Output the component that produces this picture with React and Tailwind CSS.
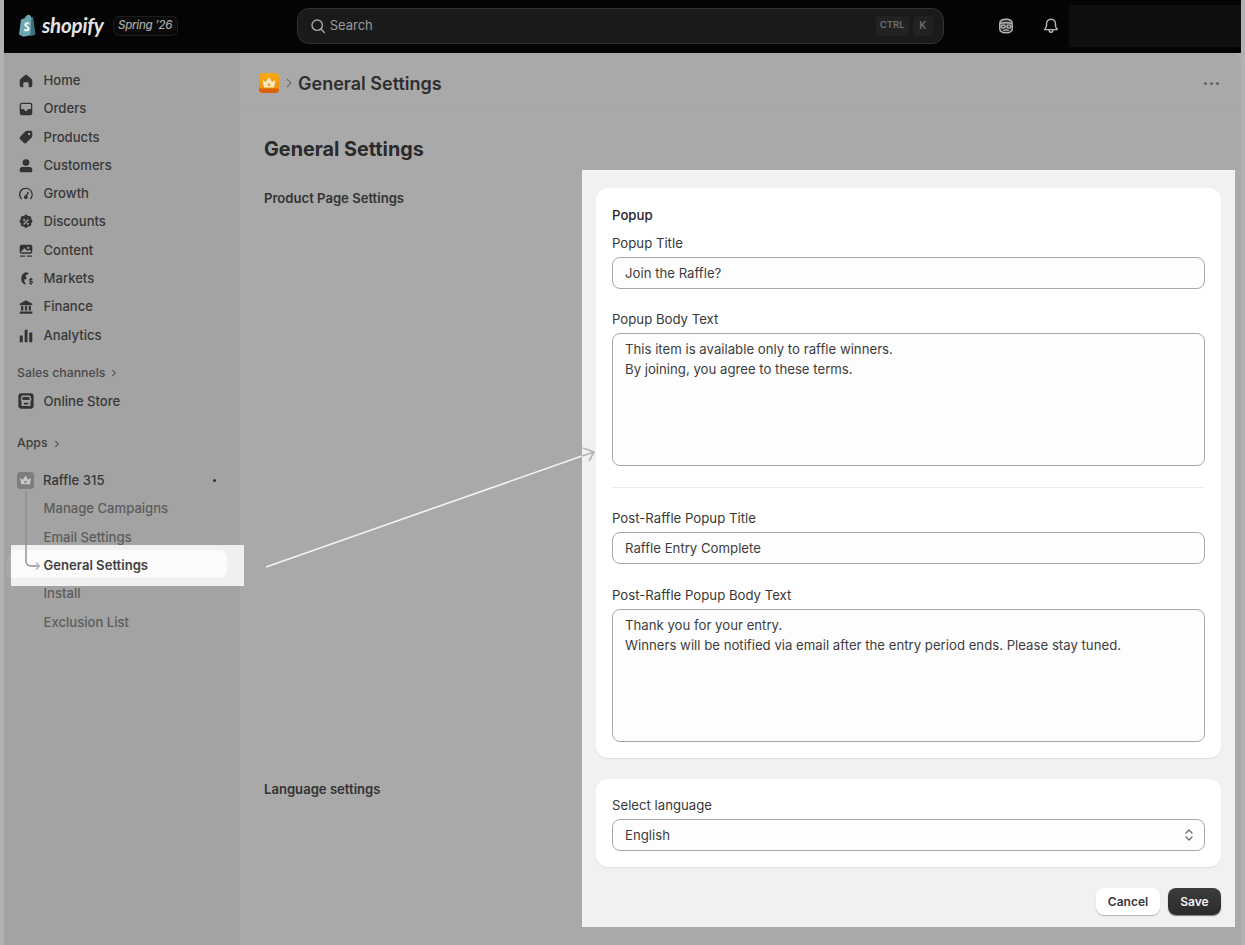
import React from "react";

const font = { fontFamily: "Inter, 'Liberation Sans', sans-serif" };

// nav icons, drawn on a 20x20 box
const icons = {
  home: <path d="M8.9 3.4a1.7 1.7 0 0 1 2.2 0l5 4.3c.6.5.9 1.200.9 1.900v5.400a2 2 0 0 1-2 2h-2v-4a1.500 1.500 0 0 0-1.500-1.500h-3a1.500 1.500 0 0 0-1.500 1.500v4h-2a2 2 0 0 1-2-2v-5.400c0-.7.3-1.400.9-1.900z" />,
  orders: <path fillRule="evenodd" d="M5.500 3h9A2.500 2.500 0 0 1 17 5.500v9a2.500 2.500 0 0 1-2.500 2.500h-9A2.500 2.500 0 0 1 3 14.500v-9A2.500 2.500 0 0 1 5.500 3zm0 1.500a1 1 0 0 0-1 1V10h2.700c.6 0 1.100.4 1.200 1 .2.700.8 1.200 1.600 1.200s1.400-.5 1.600-1.200c.1-.6.6-1 1.200-1h2.700V5.500a1 1 0 0 0-1-1z" />,
  products: <path fillRule="evenodd" d="M11 3h4a2 2 0 0 1 2 2v4c0 .6-.2 1.100-.6 1.500l-6 6a2 2 0 0 1-2.800 0l-4.100-4.100a2 2 0 0 1 0-2.800l6-6c.4-.4.9-.6 1.500-.6zm2.500 5a1.300 1.300 0 1 0 0-2.600 1.300 1.300 0 0 0 0 2.600z" />,
  customers: <path d="M10 2.500a3.700 3.700 0 1 1 0 7.400 3.700 3.700 0 0 1 0-7.400zM5.800 11h8.400c1.600 0 2.800 1.300 2.800 2.800v1.700c0 .8-.7 1.500-1.500 1.500h-11c-.8 0-1.500-.7-1.500-1.500v-1.700C3 12.300 4.200 11 5.800 11z" />,
  growth: <path fillRule="evenodd" d="M10 3a7.500 7.500 0 0 1 7.500 7.500c0 2.100-.8 4.100-2.200 5.500l-1.100-1.100a6 6 0 0 0-4.200-10.400 6 6 0 0 0-4.200 10.400L4.700 16a7.500 7.500 0 0 1 5.300-13zm3.300 5.200-2 4a2 2 0 1 1-1.400-.7l2-4z" />,
  discounts: <path fillRule="evenodd" d="M8.300 2.700a2.300 2.300 0 0 1 3.400 0l.7.7 1-.1a2.300 2.300 0 0 1 2.400 2.400l-.1 1 .7.700a2.300 2.300 0 0 1 0 3.400l-.7.7.1 1a2.300 2.300 0 0 1-2.400 2.400l-1-.1-.7.7a2.300 2.300 0 0 1-3.400 0l-.7-.7-1 .1a2.300 2.300 0 0 1-2.400-2.400l.1-1-.7-.7a2.300 2.300 0 0 1 0-3.400l.7-.7-.1-1a2.300 2.300 0 0 1 2.400-2.400l1 .1zM8 6.800a1.200 1.200 0 1 0 0 2.400 1.200 1.200 0 0 0 0-2.400zm4 4a1.200 1.200 0 1 0 0 2.400 1.200 1.200 0 0 0 0-2.400zm.3-4-5.500 5.500 1 1 5.500-5.500z" />,
  content: <path fillRule="evenodd" d="M5 3h10a2 2 0 0 1 2 2v6a2 2 0 0 1-2 2H5a2 2 0 0 1-2-2V5a2 2 0 0 1 2-2zm7.500 2.200a1.300 1.300 0 1 0 0 2.600 1.300 1.300 0 0 0 0-2.600zM4.500 10.500v.5a.5.500 0 0 0 .5.500h10a.5.500 0 0 0 .5-.5V10l-2-1.500-2 1.500-3-3zM3.500 15h5.500v1.500H3.500zM11 15h5.500v1.500H11z" />,
  markets: <path fillRule="evenodd" d="M9.500 2.500c1.300 0 2.500.3 3.500 1l-1 1.500-1.800.4-.7 1.600 1.200 1.500-.4 1.500-2 .6-.3 2 1.300 1.800.2 2a7.500 7.500 0 0 1 0-14zM14.500 8.500h1.500v1.100h1.200v1.400h-2.500a.4.400 0 0 0 0 .8h1.300a1.800 1.800 0 0 1 .5 3.500v1.200H15v-1.100h-1.500v-1.400h2.800a.4.400 0 0 0 0-.8H15a1.800 1.800 0 0 1-.5-3.500z" />,
  finance: <path d="M10 2.500l7 3.800v1.700H3V6.300zM4.500 9H7v5H4.500zM8.800 9h2.400v5H8.800zM13 9h2.500v5H13zM3 15h14v2.500H3z" />,
  analytics: <path d="M9 3h2.200c.3 0 .5.200.5.500v13c0 .3-.2.500-.5.500H9c-.3 0-.5-.2-.5-.5v-13c0-.3.200-.5.500-.500zM3.700 9.500h2c.4 0 .7.300.7.700v6.100c0 .4-.3.700-.7.700h-2a.7.700 0 0 1-.7-.7v-6.100c0-.4.300-.7.700-.7zM14.300 6h2c.4 0 .7.300.7.700v9.600c0 .4-.3.700-.7.700h-2a.7.700 0 0 1-.7-.7V6.700c0-.4.300-.7.700-.7z" />,
  store: <path fillRule="evenodd" d="M5 1.500h10A3.500 3.500 0 0 1 18.500 5v10a3.500 3.500 0 0 1-3.500 3.500H5A3.500 3.500 0 0 1 1.500 15V5A3.500 3.500 0 0 1 5 1.500zM5.500 4 4 8.300c0 .9.500 1.500 1 1.700v5.500h10V10c.5-.2 1-.8 1-1.700L14.500 4zm2 8h5v2h-5zM6.500 5.500h7l.8 2.800c0 .4-.3.700-.7.700-.5 0-.9-.3-1.100-.8-.2.500-1.200.8-2.500.8s-2.300-.3-2.500-.8c-.2.500-.6.800-1.100.8-.4 0-.7-.3-.7-.7z" />,
};

const mainNav = [
  ["home", "Home"],
  ["orders", "Orders"],
  ["products", "Products"],
  ["customers", "Customers"],
  ["growth", "Growth"],
  ["discounts", "Discounts"],
  ["content", "Content"],
  ["markets", "Markets"],
  ["finance", "Finance"],
  ["analytics", "Analytics"],
];

function NavIcon({ name }) {
  return (
    <svg viewBox="0 0 20 20" className="w-[18px] h-[18px] shrink-0" fill="#333333">
      {icons[name]}
    </svg>
  );
}

function NavRow({ icon, label }) {
  return (
    <div className="h-[28.33px] flex items-center gap-[9px] pl-[9.500px] text-[13.100px] font-medium text-[#383838]">
      <NavIcon name={icon} />
      <span>{label}</span>
    </div>
  );
}

function SubRow({ label }) {
  return (
    <div className="h-[28.33px] flex items-center pl-[36.500px] text-[13.100px] font-medium text-[#5c5c5c]">
      {label}
    </div>
  );
}

function Crown({ className, gray }) {
  return (
    <svg viewBox="0 0 20 20" className={className}>
      <defs>
        <linearGradient id="crownBg" x1="0" y1="0" x2="0" y2="1">
          <stop offset="0" stopColor="#f5ab12" />
          <stop offset="1" stopColor="#ee8a06" />
        </linearGradient>
      </defs>
      <rect width="20" height="20" rx="4" fill={gray ? "#7d7d7d" : "url(#crownBg)"} />
      {!gray && <path d="M0 15.500h20v.5a4 4 0 0 1-4 4H4a4 4 0 0 1-4-4z" fill="#dd6205" />}
      <path d="M3.500 7l3.500 2L10 4l3 5 3.500-2-1.500 7.500H5z" fill={gray ? "#c9c9c9" : "#fdeccb"} />
      <rect x="8.500" y="10.500" width="3" height="2.500" fill={gray ? "#8d8d8d" : "#e9a63a"} />
    </svg>
  );
}

function Label({ children }) {
  return <label className="block text-[13.200px] leading-[14px] text-[#383838]">{children}</label>;
}

function TextInput({ value }) {
  return (
    <input
      readOnly
      value={value}
      className="mt-[7px] block w-full h-[32px] px-3 rounded-lg border border-[#a8a8a8] bg-[#fdfdfd] text-[13.200px] text-[#3d3d3d] outline-none"
    />
  );
}

function TextArea({ value }) {
  return (
    <textarea
      readOnly
      value={value}
      className="mt-[7px] block w-full h-[133px] px-3 py-[6px] rounded-lg border border-[#a8a8a8] bg-[#fdfdfd] text-[13.200px] leading-[19.500px] text-[#3d3d3d] outline-none resize-none"
    />
  );
}

export default function App() {
  return (
    <div style={font} className="relative w-[1245px] h-[945px] overflow-hidden bg-[#b2b2b2] px-[4px]">
      {/* Top bar */}
      <header className="h-[53px] bg-[#040404] flex items-center pl-[14px] pb-[2px]">
        <svg viewBox="0 0 20 23" className="w-[20px] h-[23px] shrink-0">
          <path d="M3 5.500 7 4c.7-2 2-3.300 3.500-3.300S13 2 13.300 3.500l1.500-.3 2.200 17-11.500 2.500L1 20.500z" fill="#6aa7b1" />
          <path d="M13.300 3.500 15 3.200l2.500 17-5 2.300z" fill="#3d7178" />
          <path d="M11.500 8.800c-.7-.4-1.500-.5-2.200-.5-2 0-3 1.200-3 2.500 0 2.300 3 2.300 3 3.700 0 .5-.4.800-1 .8-.8 0-1.800-.6-1.800-.6l-.5 1.900s1 .9 2.500.9c2 0 3.100-1.300 3.100-2.800 0-2.500-3-2.700-3-3.700 0-.3.200-.7 1-.7.600 0 1.300.3 1.300.3z" fill="#f4f4f4" />
        </svg>
        <span style={{ fontFamily: "Lato, sans-serif" }} className="ml-[4px] text-[20.500px] font-bold italic text-[#e4e4e4] tracking-[-0.2px]">
          shopify
        </span>
        <span className="ml-[9px] h-[20px] w-[65px] flex items-center justify-center whitespace-nowrap rounded-md border border-[#1c1c1c] bg-[#0a0a0a] text-[11.500px] font-medium italic text-[#a8a8a8] tracking-[-0.3px]">
          Spring ’26
        </span>
        <div className="ml-[119px] w-[647px] h-[36px] flex items-center rounded-xl border border-[#333333] bg-[#1a1a1a] pl-[12px] pr-[10px] shrink-0">
          <svg viewBox="0 0 20 20" className="w-[16px] h-[16px]" fill="none" stroke="#a3a3a3" strokeWidth="1.800" strokeLinecap="round">
            <circle cx="9" cy="9" r="6.500" />
            <path d="M14 14l4 4" />
          </svg>
          <span className="ml-[4px] text-[13px] text-[#9a9a9a]">Search</span>
          <span className="ml-auto h-[20px] px-[4px] flex items-center rounded bg-[#222222] text-[9.500px] font-semibold text-[#6f6f6f]">CTRL</span>
          <span className="ml-[4px] w-[20px] h-[20px] flex items-center justify-center rounded bg-[#222222] text-[10px] font-semibold text-[#6f6f6f]">K</span>
        </div>
        <svg viewBox="0 0 20 20" className="ml-[53px] w-[18px] h-[18px] shrink-0" fill="none" stroke="#b5b5b5" strokeWidth="1.500">
          <path d="M3 7.500C3 4 6 2.500 10 2.500s7 1.500 7 5V13c0 3-3 4.500-7 4.500S3 16 3 13z" fill="#333333" />
          <path d="M3 7.500c3-1.500 11-1.500 14 0" />
          <rect x="4.500" y="9" width="4.500" height="3" rx="1.200" />
          <rect x="11" y="9" width="4.500" height="3" rx="1.200" />
          <path d="M7 15c2-1 4-1 6 0" />
        </svg>
        <svg viewBox="0 0 20 20" className="ml-[27px] w-[18px] h-[18px] shrink-0" fill="none" stroke="#b5b5b5" strokeWidth="1.600" strokeLinejoin="round">
          <path d="M10 2.500a5 5 0 0 0-5 5v2.500c0 1.500-1.500 3-2 4h14c-.5-1-2-2.500-2-4V7.500a5 5 0 0 0-5-5z" />
          <path d="M8 14v1a2 2 0 0 0 4 0v-1" />
        </svg>
        <div className="ml-[9px] flex-1 h-[42px] mt-[1px] bg-[#0f0f0f]" />
      </header>

      {/* Admin frame */}
      <div className="relative flex h-[892px] rounded-tr-lg overflow-hidden bg-[#a9a9a9]">
        <nav className="w-[236px] shrink-0 bg-[#a3a3a3] pt-[13.500px] pl-[3px] pr-[13px]">
          {mainNav.map(([icon, label]) => (
            <NavRow key={label} icon={icon} label={label} />
          ))}

          <div className="mt-[13.500px] h-[20px] pl-[10px] flex items-center gap-[5px] text-[12.300px] font-medium text-[#4a4a4a]">
            Sales channels
            <svg viewBox="0 0 10 10" className="w-[8px] h-[8px]" fill="none" stroke="#4a4a4a" strokeWidth="1.300"><path d="M3 1.500 6.500 5 3 8.500" /></svg>
          </div>
          <div className="mt-[4px]"><NavRow icon="store" label="Online Store" /></div>

          <div className="mt-[18px] h-[20px] pl-[10px] flex items-center gap-[5px] text-[12.300px] font-medium text-[#3f3f3f]">
            Apps
            <svg viewBox="0 0 10 10" className="w-[8px] h-[8px]" fill="none" stroke="#4a4a4a" strokeWidth="1.300"><path d="M3 1.500 6.500 5 3 8.500" /></svg>
          </div>

          <div className="relative mt-[13px]">
            <div className="h-[28.33px] flex items-center gap-[9px] pl-[10px] text-[13.100px] font-medium text-[#383838]">
              <Crown gray className="w-[17px] h-[17px] shrink-0" />
              <span>Raffle 315</span>
              <span className="ml-auto mr-[11px] w-[3px] h-[3px] rounded-full bg-[#2f2f2f]" />
            </div>
            <SubRow label="Manage Campaigns" />
            <SubRow label="Email Settings" />
            <div className="relative h-[28.33px] bg-[#aaaaaa] rounded-lg">
              {/* highlight cut-out from the annotation */}
              <div className="absolute left-[4px] -top-[7px] w-[233px] h-[41px] bg-[#f0f0f0]">
                <div className="mt-[5px] w-[216px] h-[28px] pt-[4px] bg-[#fbfbfb] rounded-r-lg flex items-center pl-[32.500px] text-[13.100px] font-semibold text-[#404040]">
                  General Settings
                </div>
              </div>
            </div>
            <SubRow label="Install" />
            <SubRow label="Exclusion List" />
            {/* tree line under the app icon */}
            <svg className="absolute left-[17px] top-[24px] w-[24px] h-[80px]" viewBox="0 0 24 80" fill="none" stroke="#8e8e8e" strokeWidth="1.400">
              <path d="M2 0v70q0 5 5 5h8" />
              <path d="M12 71.500 15.500 75 12 78.500" stroke="#b5b5b5" />
            </svg>
          </div>
        </nav>

        <main className="flex-1 min-w-0">
          <div className="h-[57px] pt-[4px] border-b border-[#a4a4a4] flex items-center pl-[19px] pr-[22px]">
            <Crown className="w-[20px] h-[20px]" />
            <svg viewBox="0 0 10 10" className="ml-[5px] w-[10px] h-[10px]" fill="none" stroke="#6d6d6d" strokeWidth="1.100"><path d="M3 1 7 5 3 9" /></svg>
            <span className="ml-[4px] text-[18px] font-semibold text-[#2e2e2e]">General Settings</span>
            <div className="ml-auto flex gap-[3px]">
              <span className="w-[3px] h-[3px] rounded-full bg-[#666666]" />
              <span className="w-[3px] h-[3px] rounded-full bg-[#666666]" />
              <span className="w-[3px] h-[3px] rounded-full bg-[#666666]" />
            </div>
          </div>

          <div className="flex">
            <div className="w-[342px] pl-6 pt-[27px] shrink-0">
              <h1 className="text-[19.800px] leading-[24px] font-bold text-[#2a2a2a]">General Settings</h1>
              <h2 className="mt-[27px] text-[13.100px] leading-[20px] font-semibold text-[#333333]">Product Page Settings</h2>
              <h2 className="mt-[571px] text-[13.100px] leading-[20px] font-semibold text-[#333333]">Language settings</h2>
            </div>

            {/* Highlighted panel */}
            <div className="mt-[60px] w-[653px] h-[757px] bg-[#f1f1f1] pt-[18px] pl-[14px] pr-[14px]">
              <section className="h-[570px] rounded-xl bg-white shadow-[0_1px_1px_rgba(0,0,0,0.08)] px-4 pt-[20px]">
                <h3 className="text-[13.200px] leading-[14px] font-medium text-[#262626]">Popup</h3>
                <div className="mt-[14px]"><Label>Popup Title</Label></div>
                <TextInput value="Join the Raffle?" />
                <div className="mt-[23px]"><Label>Popup Body Text</Label></div>
                <TextArea value={"This item is available only to raffle winners.\nBy joining, you agree to these terms."} />
                <div className="mt-[21px] mb-[23px] h-px bg-[#ececec]" />
                <Label>Post-Raffle Popup Title</Label>
                <TextInput value="Raffle Entry Complete" />
                <div className="mt-[24px]"><Label>Post-Raffle Popup Body Text</Label></div>
                <TextArea value={"Thank you for your entry.\nWinners will be notified via email after the entry period ends. Please stay tuned."} />
              </section>

              <section className="mt-[21px] h-[88px] rounded-xl bg-white shadow-[0_1px_1px_rgba(0,0,0,0.08)] px-4 pt-[19px]">
                <Label>Select language</Label>
                <div className="relative">
                  <select className="mt-[7px] block w-full h-[32px] pl-3 pt-px rounded-lg border border-[#a8a8a8] bg-[#fdfdfd] text-[13.200px] text-[#3d3d3d] outline-none appearance-none">
                    <option>English</option>
                  </select>
                  <svg viewBox="0 0 12 16" className="absolute right-[10px] top-[8px] w-[12px] h-[16px] pointer-events-none" fill="none" stroke="#6a6a6a" strokeWidth="1.300" strokeLinecap="round" strokeLinejoin="round">
                    <path d="M3 6 6 3l3 3M3 10l3 3 3-3" />
                  </svg>
                </div>
              </section>

              <div className="mt-[21px] flex justify-end gap-2">
                <button className="w-[64px] h-[27px] rounded-lg bg-white shadow-[0_1px_1px_rgba(0,0,0,0.25)] text-[12px] font-semibold text-[#3a3a3a]">Cancel</button>
                <button className="w-[53px] h-[27px] rounded-lg bg-gradient-to-b from-[#3c3c3c] to-[#2b2b2b] shadow-[0_1px_1px_rgba(0,0,0,0.5)] text-[12px] font-semibold text-[#f4f4f4]">Save</button>
              </div>
            </div>
          </div>
        </main>
      </div>

      {/* Annotation arrow */}
      <svg className="absolute left-0 top-0 w-[1245px] h-[945px] pointer-events-none" viewBox="0 0 1245 945" fill="none">
        <path d="M266 567 582 456" stroke="#f4f4f4" strokeWidth="1.600" />
        <path d="M582 456 594 452M583 448 594 452 589 461" stroke="#b4b4b4" strokeWidth="1.600" />
      </svg>
    </div>
  );
}
